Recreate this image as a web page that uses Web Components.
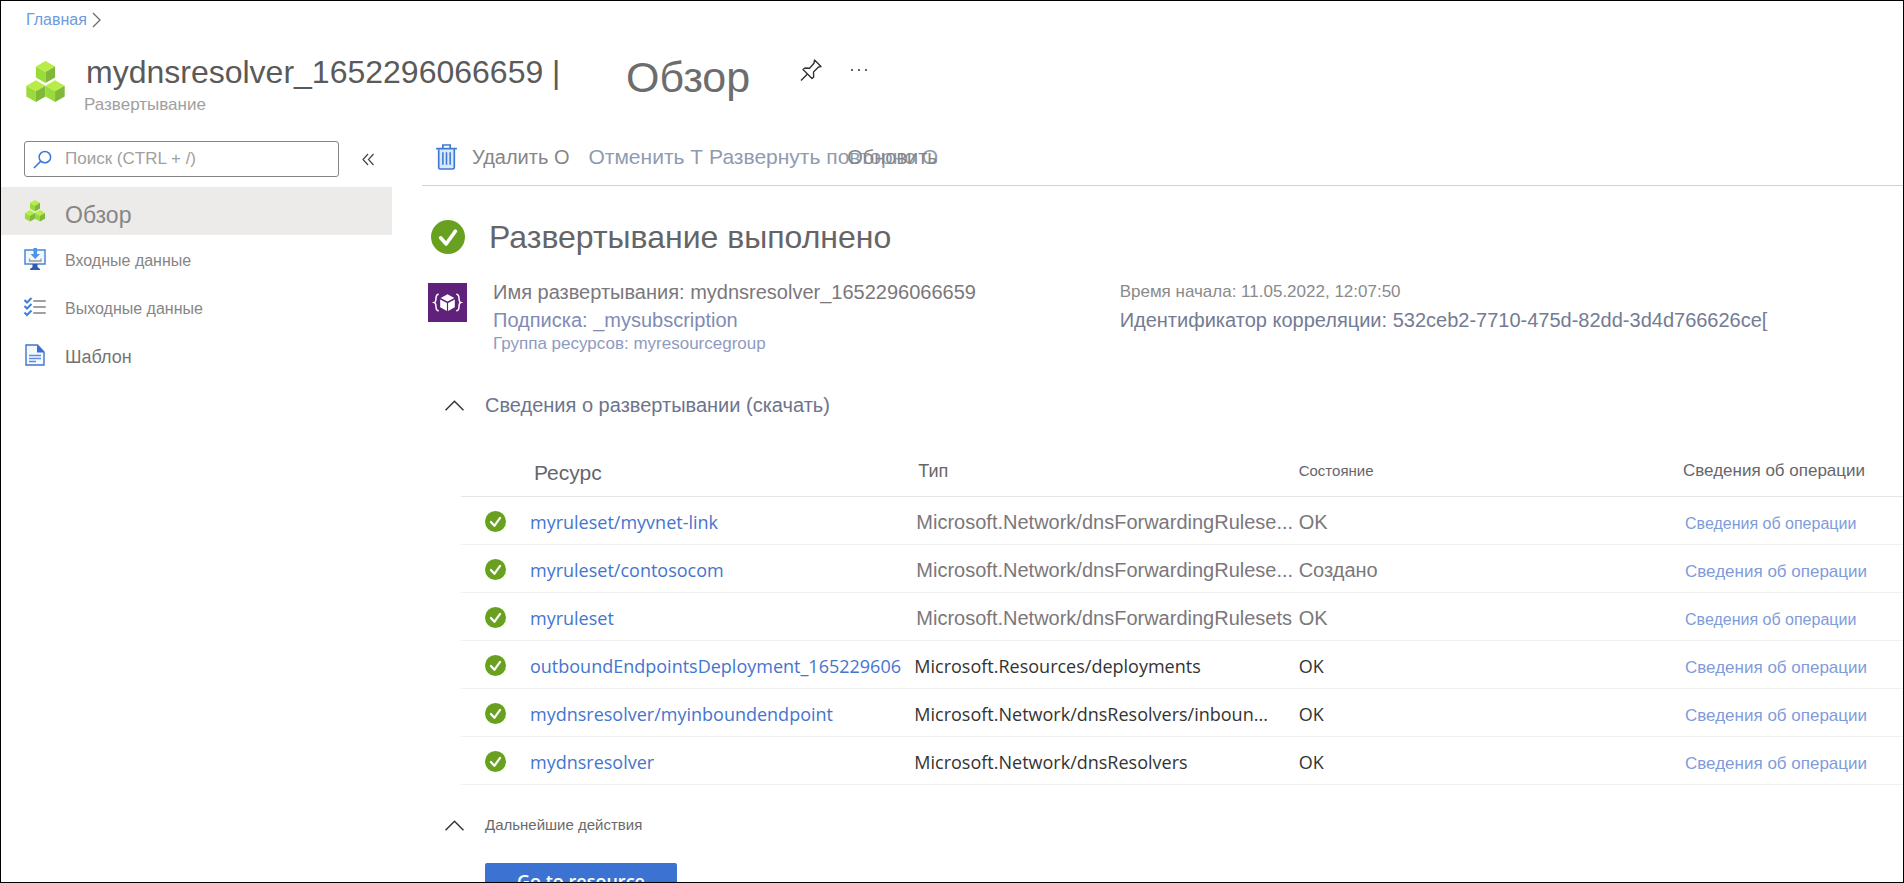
<!DOCTYPE html>
<html lang="ru">
<head>
<meta charset="utf-8">
<title>mydnsresolver_1652296066659 | Обзор</title>
<style>
  body { margin: 0; font: 16px/20px "Liberation Sans", Arial, sans-serif; color: #5f5f63; background: #fff; }
</style>
</head>
<body>
<deployment-page></deployment-page>

<script>
const define = (name, html, setup) => {
  const template = document.createElement('template');
  template.innerHTML = html;
  customElements.define(name, class extends HTMLElement {
    constructor() {
      super();
      this.attachShadow({ mode: 'open' }).append(template.content.cloneNode(true));
    }
    connectedCallback() { if (setup) setup(this, this.shadowRoot); }
  });
};

const cube = (x, y) => `<g transform="translate(${x} ${y})">
  <path fill="#b9ec47" d="M10 0l10.500 6-10.500 6L-.5 6z"/>
  <path fill="#9adb3c" d="M-.5 6L10 12v12L-.5 18z"/>
  <path fill="#7fb83a" d="M20.500 6L10 12v12l10.500-6z"/></g>`;

const ICONS = {
  cubes: ['0 0 42 46', cube(11, 0) + cube(0.5, 21) + cube(21.5, 21)],
  search: ['0 0 20 20', '<g fill="none" stroke="#3b78d8" stroke-width="1.6"><circle cx="12.5" cy="7.5" r="6"/><path d="M8 12L1 19"/></g>'],
  pin: ['0 0 22 22', '<g fill="none" stroke="#333" stroke-width="1.4" stroke-linejoin="round"><path d="M14.500 1l6.500 6.500-2.500.5-5 5 .2 5L12 19.500 3 10.500 5 9l4.500.3 4.500-5z"/><path d="M7.500 15L1 21.500"/></g>'],
  dots: ['0 0 18 4', '<g fill="#444"><circle cx="2" cy="2" r="1.1"/><circle cx="9" cy="2" r="1.1"/><circle cx="16" cy="2" r="1.1"/></g>'],
  collapse: ['0 0 12 13', '<path fill="none" stroke="#444" stroke-width="1.2" d="M6 1L1 6.500l5 5.500M11.500 1l-5 5.500 5 5.500"/>'],
  right: ['0 0 9 16', '<path fill="none" stroke="#6a6a6a" stroke-width="1.3" d="M1 1l7 7-7 7"/>'],
  up: ['0 0 18 10', '<path fill="none" stroke="#333" stroke-width="1.4" d="M.5 9.500L9 1l8.500 8.500"/>'],
  monitor: ['0 0 22 22', '<rect x="1" y="2" width="20" height="14" fill="#f2f8fd" stroke="#4a86d8" stroke-width="1.5"/><path fill="#2f5bb0" d="M8.500 16h5v3l2.500 2v1H6v-1l2.500-2z"/><path fill="#4f93e8" d="M9.500 0h3.500v6h3l-4.800 5L6.500 6h3z"/><path fill="none" stroke="#999" stroke-width="1.3" d="M5.500 10.500V13h11.500v-2.500"/>'],
  checklist: ['0 0 22 20', '<g fill="none" stroke-width="2"><path stroke="#3f80dc" d="M.5 3l2.500 2.500L7.500 1M.5 9l2.500 2.500L7.500 7M.5 15.500L3 18l4.500-4.500"/><path stroke="#a0a0a0" stroke-linecap="round" d="M10 4h11M10 10h11M10 16h11"/></g>'],
  document: ['0 0 20 22', '<path fill="#f4f9fe" stroke="#3f74d2" stroke-width="1.4" d="M1 1h11.500L19 8v13H1z"/><path fill="#3a6fd0" d="M12 1l7.500 7.500H12z"/><path stroke="#5b8ee2" stroke-width="1.5" d="M4 11.500h12M4 14.500h12M4 17.500h7"/>'],
  trash: ['0 0 20 25', '<g fill="none" stroke="#3f78d4" stroke-width="1.6"><path fill="#d9e9fb" d="M2.500 5v17.500a1.500 1.500 0 0 0 1.500 1.500h12a1.500 1.500 0 0 0 1.500-1.500V5"/><path d="M0 4.500h20M6.500 4V1h7v3"/><path stroke-width="1.500" d="M6.500 8v12M10 8v12M13.500 8v12"/></g>'],
  success: ['0 0 22 22', '<circle cx="11" cy="11" r="11" fill="#68a11f"/><path fill="none" stroke="#fff" stroke-width="2.300" stroke-linecap="round" stroke-linejoin="round" d="M6.200 11.500l3.600 4 6-8.300"/>'],
  template: ['0 0 40 40', '<path fill="#5f2179" d="M0 0h40v40H0z"/><g fill="#fff"><path d="M20 11.500l7 3.800-7 3.800-7-3.800zM12.500 16.800l6.900 3.800v8.200l-6.900-3.900zM27.500 16.800l-6.900 3.800v8.200l6.900-3.900z"/></g><g fill="none" stroke="#fff" stroke-width="1.500"><path d="M11 11.500c-5 0-1 7.500-4.500 8.500 3.500 1-.5 8.500 4.500 8.500M29 11.500c5 0 1 7.500 4.500 8.500-3.500 1 .5 8.500-4.500 8.500"/></g>']
};

define('ui-icon', `<style>
  :host { display: inline-flex; flex: none; }
  svg { width: 100%; height: 100%; display: block; }
</style><svg aria-hidden="true"></svg>`, (el, root) => {
  const icon = ICONS[el.getAttribute('name')];
  if (!icon) return;
  const svg = root.querySelector('svg');
  svg.setAttribute('viewBox', icon[0]);
  svg.innerHTML = icon[1];
});

define('bread-crumb', `<style>
  :host { display: flex; align-items: center; gap: 5px; height: 37px; padding-left: 25px; }
  a { color: #6c9be0; text-decoration: none; }
  ui-icon { width: 9px; height: 16px; }
</style><a href="#home">Главная</a><ui-icon name="right"></ui-icon>`);

define('page-header', `<style>
  :host { display: flex; align-items: flex-start; height: 78px; padding: 13px 0 0 24px; }
  .logo { width: 41px; height: 42px; margin-top: 10px; }
  .titles { margin: 1px 0 0 18px; width: 542px; }
  h1, h2, p { margin: 0; font-weight: normal; }
  h1 { font-size: 32px; line-height: 40px; color: #5a5a5a; padding-left: 2px; white-space: nowrap; }
  p { font-size: 17px; line-height: 20px; color: #a0a0a0; margin-top: 3px; }
  h2 { font-size: 43px; line-height: 52px; color: #6d6d6d; margin-right: 50px; }
  button { border: 0; background: none; padding: 0; display: flex; }
  .pin { width: 22px; height: 22px; margin-top: 8px; }
  .dots { width: 18px; height: 4px; margin: 17px 0 0 28px; }
</style>
<ui-icon class="logo" name="cubes"></ui-icon>
<div class="titles"><h1>mydnsresolver_1652296066659 |</h1><p>Развертывание</p></div>
<h2>Обзор</h2>
<button aria-label="Закрепить"><ui-icon class="pin" name="pin"></ui-icon></button>
<button aria-label="Еще"><ui-icon class="dots" name="dots"></ui-icon></button>`);

define('nav-item', `<style>
  :host { display: block; font-size: 16px; }
  :host([selected]) { background: #ecebea; font-size: 23px; }
  :host([strong]) { font-size: 18px; }
  a { display: flex; align-items: center; gap: 19px; height: 48px; padding-left: 23px; color: #868686; text-decoration: none; }
  span { padding-top: 4px; }
  :host([selected]) a { line-height: 28px; }
  :host([selected]) span { padding-top: 8px; }
  :host([strong]) a { color: #747474; }
  .icon { display: flex; }
  ui-icon { width: 22px; height: 22px; }
</style><a href="#"><div class="icon"></div><span><slot></slot></span></a>`, (el, root) => {
  const icon = document.createElement('ui-icon');
  icon.setAttribute('name', el.getAttribute('icon'));
  root.querySelector('.icon').replaceChildren(icon);
});

define('side-nav', `<style>
  :host { display: block; padding-top: 12px; }
  .search { display: flex; align-items: center; height: 36px; margin: 0 0 10px 23px; }
  label { display: flex; align-items: center; gap: 13px; width: 315px; height: 36px; box-sizing: border-box; padding: 0 8px; border: 1px solid #858585; border-radius: 3px; }
  label ui-icon { width: 19px; height: 19px; }
  input { flex: 1; min-width: 0; border: 0; padding: 0; outline: 0; background: none; font: inherit; font-size: 17px; }
  input::placeholder { color: #a0a0a0; opacity: 1; }
  button { border: 0; background: none; padding: 0; margin-left: 23px; display: flex; }
  button ui-icon { width: 12px; height: 13px; }
</style>
<div class="search">
  <label><ui-icon name="search"></ui-icon><input type="text" aria-label="Поиск" placeholder="Поиск (CTRL + /)"></label>
  <button aria-label="Свернуть меню"><ui-icon name="collapse"></ui-icon></button>
</div>
<nav>
  <nav-item selected icon="cubes">Обзор</nav-item>
  <nav-item icon="monitor">Входные данные</nav-item>
  <nav-item icon="checklist">Выходные данные</nav-item>
  <nav-item strong icon="document">Шаблон</nav-item>
</nav>`);

define('tool-bar', `<style>
  :host { display: flex; align-items: center; height: 56px; padding-left: 14px; border-bottom: 1px solid #d2d2d2; }
  button { border: 0; background: none; padding: 0; font: inherit; font-size: 20px; line-height: 24px; color: #868686; display: flex; align-items: center; white-space: nowrap; }
  ui-icon { width: 21px; height: 26px; margin-right: 15px; }
  .off { font-size: 21px; color: #8f9bb0; }
  .cancel { margin: 0 6px 0 19px; }
  .refresh { margin-left: -91px; }
</style>
<button><ui-icon name="trash"></ui-icon>Удалить O</button>
<button class="off cancel">Отменить T</button>
<button class="off">Развернуть повторно O</button>
<button class="refresh">Обновить</button>`);

define('deployment-summary', `<style>
  :host { display: block; padding-top: 31px; }
  .status { display: flex; align-items: center; gap: 24px; height: 40px; padding-left: 9px; }
  .status ui-icon { width: 34px; height: 34px; }
  h2 { margin: 0; font-size: 32px; line-height: 40px; font-weight: normal; color: #656567; }
  .info { display: flex; gap: 26px; padding: 21px 0 0 6px; }
  .info > ui-icon { width: 39px; height: 39px; margin-top: 5px; }
  .facts { flex: 1; display: grid; grid-template-columns: 4fr 5fr; font-size: 20px; line-height: 28px; white-space: nowrap; }
  p { margin: 0; }
  a { color: inherit; text-decoration: none; }
  .name { color: #7b777c; }
  .sub { color: #7f8bb5; }
  .group { font-size: 17px; line-height: 20px; color: #8f9bc0; }
  .time { font-size: 17px; color: #8a8a8a; }
  .id { color: #747b93; }
</style>
<div class="status"><ui-icon name="success"></ui-icon><h2>Развертывание выполнено</h2></div>
<div class="info">
  <ui-icon name="template"></ui-icon>
  <div class="facts">
    <div>
      <p class="name">Имя развертывания: mydnsresolver_1652296066659</p>
      <p class="sub">Подписка: <a href="#sub">_mysubscription</a></p>
      <p class="group">Группа ресурсов: <a href="#group">myresourcegroup</a></p>
    </div>
    <div>
      <p class="time">Время начала: 11.05.2022, 12:07:50</p>
      <p class="id">Идентификатор корреляции: 532ceb2-7710-475d-82dd-3d4d766626ce[</p>
    </div>
  </div>
</div>`);

define('fold-section', `<style>
  :host { display: block; }
  button { border: 0; background: none; font: inherit; color: inherit; padding: 0 0 0 23px; display: flex; align-items: center; gap: 21px; line-height: 28px; }
  ui-icon { width: 19px; height: 11px; }
</style><button aria-expanded="true"><ui-icon name="up"></ui-icon><slot name="title"></slot></button><slot></slot>`);

const ROWS = [
  ['myruleset/myvnet-link', 'Microsoft.Network/dnsForwardingRulese...', 'OK', 'soft small'],
  ['myruleset/contosocom', 'Microsoft.Network/dnsForwardingRulese...', 'Создано', 'soft'],
  ['myruleset', 'Microsoft.Network/dnsForwardingRulesets', 'OK', 'soft small'],
  ['outboundEndpointsDeployment_1652296066659', 'Microsoft.Resources/deployments', 'OK', ''],
  ['mydnsresolver/myinboundendpoint', 'Microsoft.Network/dnsResolvers/inboun...', 'OK', ''],
  ['mydnsresolver', 'Microsoft.Network/dnsResolvers', 'OK', '']
];

define('resource-table', `<style>
  :host { display: block; padding: 26px 0 0 39px; }
  table { width: 100%; table-layout: fixed; border-collapse: separate; border-spacing: 0; }
  .c-icon { width: 69px; }
  .c-op { width: 220px; }
  th, td { box-sizing: border-box; padding: 0; text-align: left; font-weight: normal; white-space: nowrap; line-height: 24px; }
  th { height: 52px; vertical-align: middle; border-bottom: 1px solid #e6e6e6; font-size: 17px; color: #66666a; }
  th:nth-child(2) { font-size: 21px; padding: 4px 0 0 4px; }
  th:nth-child(3) { font-size: 18px; padding-left: 4px; }
  th:nth-child(4) { font-size: 15px; }
  td { height: 48px; padding-top: 13px; vertical-align: baseline; border-bottom: 1px solid #f0f0f0; font-family: "Open Sans", "Segoe UI", sans-serif; font-size: 18px; color: #333; }
  td:first-child { padding: 0 0 2px 24px; vertical-align: middle; }
  td:nth-child(2) { padding-right: 12px; }
  td:nth-child(2) a { display: block; overflow: clip; }
  ui-icon { width: 21px; height: 21px; vertical-align: middle; }
  a { color: #4475cf; text-decoration: none; }
  .soft td:nth-child(3), .soft td:nth-child(4) { font-family: "Liberation Sans", Arial, sans-serif; font-size: 20px; color: #7b777c; }
  .soft td:nth-child(3) { padding-left: 2px; }
  td:nth-child(5) { font-family: "Liberation Sans", Arial, sans-serif; font-size: 17px; padding-left: 2px; }
  .small td:nth-child(5) { font-size: 16px; }
  td:nth-child(5) a { color: #7f9bdc; }
</style>
<table>
  <colgroup><col class="c-icon"><col><col><col><col class="c-op"></colgroup>
  <thead><tr><th></th><th>Ресурс</th><th>Тип</th><th>Состояние</th><th>Сведения об операции</th></tr></thead>
  <tbody>${ROWS.map(([name, type, state, cls]) => `<tr class="${cls}">
    <td><ui-icon name="success"></ui-icon></td><td><a href="#resource">${name}</a></td><td>${type}</td><td>${state}</td><td><a href="#operation">Сведения об операции</a></td></tr>`).join('')}</tbody>
</table>`);

define('deployment-page', `<style>
  :host { display: flex; flex-direction: column; box-sizing: border-box; height: 100vh; overflow: hidden; border: 1px solid #000; }
  .body { display: grid; grid-template-columns: 391px minmax(0, 1fr); column-gap: 30px; }
  .details { padding-top: 37px; font-size: 20px; color: #6d748c; }
  .next { padding-top: 26px; font-size: 15px; color: #6a6a6a; }
  .go { display: block; margin: 24px 0 0 63px; width: 192px; height: 36px; padding: 0; border: 0; border-radius: 2px; background: #3c73d2; color: #fff; font: 600 18px/24px "Open Sans", "Segoe UI", sans-serif; }
</style>
<header><bread-crumb></bread-crumb><page-header></page-header></header>
<div class="body">
  <side-nav></side-nav>
  <main>
    <tool-bar></tool-bar>
    <deployment-summary></deployment-summary>
    <fold-section class="details"><span slot="title">Сведения о развертывании (скачать)</span><resource-table></resource-table></fold-section>
    <fold-section class="next"><span slot="title">Дальнейшие действия</span><button class="go">Go to resource</button></fold-section>
  </main>
</div>`);
</script>
</body>
</html>
